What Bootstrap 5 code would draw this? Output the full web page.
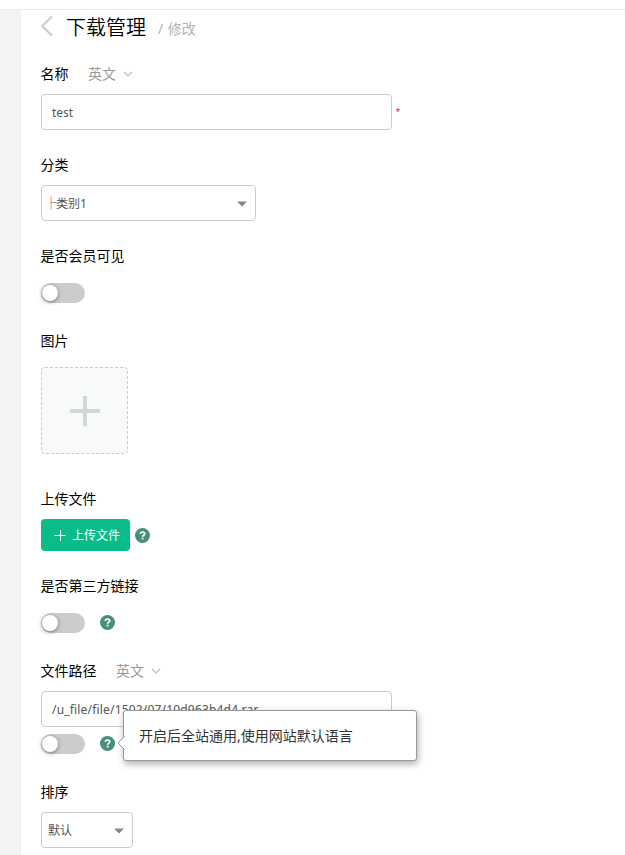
<!DOCTYPE html>
<html lang="zh-CN">
<head>
<meta charset="utf-8">
<meta name="viewport" content="width=device-width, initial-scale=1">
<title>下载管理</title>
<link href="https://cdn.jsdelivr.net/npm/bootstrap@5.3.0/dist/css/bootstrap.min.css" rel="stylesheet">
<style>
body{font-family:"Noto Sans","Noto Sans CJK SC",sans-serif;font-size:14px;line-height:20px;color:#000;height:855px;overflow:hidden}
.topbar{height:10px;border-bottom:1px solid #ebebeb}
.side{width:21px;background:#f3f3f3}
.main{padding-left:20px}
.page-head{height:34px}
.back{width:12px;height:22px;margin-right:13px}
.page-title{font-size:20px;line-height:32px;font-weight:350;padding-top:2px}
.crumb{font-size:14px;color:#b2b2b2;margin-left:12px;padding-top:4px;word-spacing:1px}
.page-form{padding-top:20px}
.field-label{height:20px;margin-bottom:10px;text-indent:-.5px}
.label-far{margin-bottom:17px}
.label-box{margin-bottom:16px}
.lang{color:#999;margin-left:20px}
.lang svg{margin-left:7px}
.field{margin-bottom:25px}
.field-switch{margin-bottom:28px}
.field-box{margin-bottom:35px}
.text-box,.drop-box{height:36px;border:1px solid #ccc;border-radius:4px;font-size:12px;color:#555}
.text-box{width:351px;padding:0 10px;box-shadow:none!important}
.path-text{letter-spacing:.18px}
.drop-box{width:215px;padding:1px 9px 0 8px}
.branch{margin:0 -1px 0 -5px}
.drop-small{width:92px;padding-left:6px}
.drop-small,.drop-box{padding-right:8.5px}
.star{font-size:10px;color:#f00;margin-left:4px;padding-top:2px;font-family:"Liberation Sans",sans-serif}
.toggle{width:44px;height:20px;border-radius:10px;background:#ccc;padding:2px 1px}
.knob{width:16px;height:16px;border-radius:50%;background:#fff;box-shadow:0 1px 4px rgba(0,0,0,.45)}
.help{margin:0 0 1px 15px}
.help-near{margin-left:5px}
.add-box{width:87px;height:87px;border:1px dashed #ccc;border-radius:4px;background:#f8faf9}
.upload{width:89px;height:32px;padding:1px 10px 0 13px;border:0;border-radius:4px;background:#0abc8a!important;font-size:12px;line-height:20px}
.path-switch{padding-top:7px}
.tip{left:82px;top:-17px;width:294px;height:51px;padding:0 15px;border:1px solid #999;border-radius:3px;background:#fff;box-shadow:1px 3px 7px rgba(0,0,0,.32);color:#333;z-index:2}
.tip-arrow{left:-7px;top:25px}
</style>
<script defer src="https://cdn.jsdelivr.net/npm/bootstrap@5.3.0/dist/js/bootstrap.bundle.min.js"></script>
</head>
<body class="bg-white d-flex flex-column">
<svg class="d-none">
  <symbol id="chevron" viewBox="0 0 10 6"><path d="M1 .8 5 4.800 9 .8" fill="none" stroke="#bbb" stroke-width="1.200"/></symbol>
  <symbol id="help" viewBox="0 0 15 15"><circle cx="7.500" cy="7.500" r="7.500" fill="#478e7d"/><path d="M5.300 5.900C5.400 4.600 6.300 4 7.500 4c1.300 0 2.200.7 2.200 1.800 0 1.500-2.100 1.500-2.100 3" fill="none" stroke="#fff" stroke-width="1.700"/><rect x="6.700" y="9.700" width="1.800" height="1.700" fill="#fff"/></symbol>
</svg>
<header class="topbar flex-shrink-0"></header>
<div class="d-flex flex-grow-1">
  <aside class="side flex-shrink-0"></aside>
  <main class="main flex-grow-1">
    <div class="page-head d-flex align-items-center">
      <svg class="back" viewBox="0 0 12 22"><path d="M11 .5 1.300 10 11 19.500" fill="none" stroke="#ccc" stroke-width="2.200"/></svg>
      <h1 class="page-title mb-0">下载管理</h1>
      <span class="crumb">/ 修改</span>
    </div>
    <form class="page-form">
      <section class="field">
        <div class="field-label d-flex align-items-center">名称<span class="lang d-flex align-items-center">英文<svg width="10" height="6"><use href="#chevron"/></svg></span></div>
        <div class="d-flex align-items-center"><input class="form-control text-box" value="test" aria-label="名称"><span class="star">*</span></div>
      </section>
      <section class="field">
        <div class="field-label">分类</div>
        <div class="drop-box d-flex align-items-center justify-content-between"><span><span class="branch">├</span>类别1</span><svg width="10" height="6"><path d="M0 .5h10L5 5.500z" fill="#888"/></svg></div>
      </section>
      <section class="field-switch">
        <div class="field-label label-far">是否会员可见</div>
        <div class="toggle"><div class="knob"></div></div>
      </section>
      <section class="field-box">
        <div class="field-label label-box">图片</div>
        <div class="add-box d-flex align-items-center justify-content-center"><svg width="30" height="30"><path d="M0 15h30M15 0v30" stroke="#cfd9d6" stroke-width="4"/></svg></div>
      </section>
      <section class="field">
        <div class="field-label">上传文件</div>
        <div class="d-flex align-items-center">
          <button type="button" class="btn btn-success upload d-flex align-items-center justify-content-between"><svg width="12" height="12"><path d="M.5 5.500h11M6.500 0v11" stroke="#fff"/></svg><span>上传文件</span></button>
          <svg class="help-near" width="15" height="15"><use href="#help"/></svg>
        </div>
      </section>
      <section class="field-switch">
        <div class="field-label label-far">是否第三方链接</div>
        <div class="d-flex align-items-center"><div class="toggle"><div class="knob"></div></div><svg class="help" width="15" height="15"><use href="#help"/></svg></div>
      </section>
      <section class="field-switch">
        <div class="field-label d-flex align-items-center">文件路径<span class="lang d-flex align-items-center">英文<svg width="10" height="6"><use href="#chevron"/></svg></span></div>
        <input class="form-control text-box path-text" value="/u_file/file/1502/07/10d963b4d4.rar" aria-label="文件路径">
        <div class="path-switch position-relative d-flex align-items-center">
          <div class="toggle"><div class="knob"></div></div><svg class="help" width="15" height="15"><use href="#help"/></svg>
          <div class="tip position-absolute d-flex align-items-center">
            <svg class="tip-arrow position-absolute" width="8" height="14"><path d="M8 0 1 7l7 7z" fill="#fff"/><path d="M7.500.5 1 7l6.500 6.500" fill="none" stroke="#999"/></svg>
            <span class="text-nowrap">开启后全站通用,使用网站默认语言</span>
          </div>
        </div>
      </section>
      <section>
        <div class="field-label">排序</div>
        <div class="drop-box drop-small d-flex align-items-center justify-content-between"><span>默认</span><svg width="10" height="6"><path d="M0 .5h10L5 5.500z" fill="#888"/></svg></div>
      </section>
    </form>
  </main>
</div>
</body>
</html>
